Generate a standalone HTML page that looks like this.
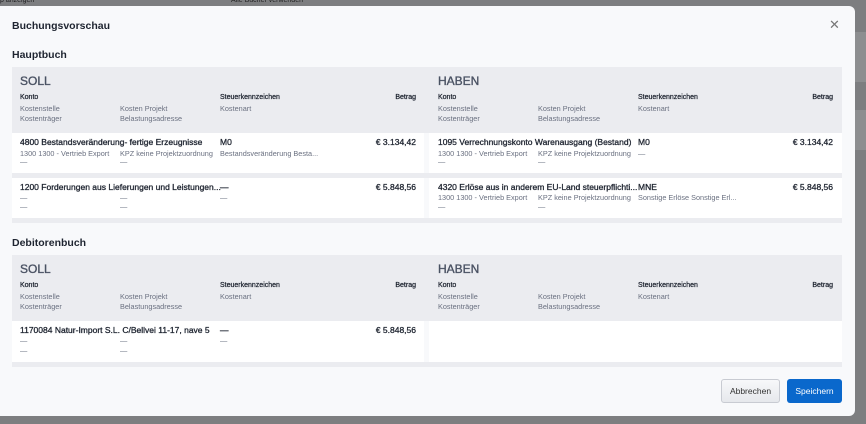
<!DOCTYPE html><html><head><meta charset="utf-8"><style>
*{margin:0;padding:0;box-sizing:border-box}
body{width:866px;height:424px;background:#7d7e80;font-family:"Liberation Sans",sans-serif;position:relative;overflow:hidden}
.a{position:absolute;white-space:nowrap}
.modal{position:absolute;left:0;top:6px;width:855px;height:410px;background:#f8f9fb;border-radius:0 6px 6px 0}
.hdr{position:absolute;background:#ebecf0}
.row{position:absolute;background:#fff}
.band{position:absolute;background:#ebecf0}
.t{font-size:12px;color:#4a5263;-webkit-text-stroke:0.35px #4a5263}
.h{font-size:7px;color:#1e2430;-webkit-text-stroke:0.25px #1e2430}
.s{font-size:7.3px;color:#6a7080}
.m{font-size:8.5px;color:#1e2430;-webkit-text-stroke:0.3px #1e2430}
.d{font-size:7.3px;color:#6a7080}
.r{text-align:right}
h2{position:absolute;font-size:10.5px;color:#1e2430;font-weight:bold}
</style></head><body>
<div class="a" style="left:0;top:-3px;font-size:7px;color:#222">p anzeigen</div>
<div class="a" style="left:231px;top:-3px;font-size:7px;color:#222">Alle Bücher verwenden</div>
<div class="a" style="left:855px;top:32px;width:11px;height:50px;background:#8d8e90"></div>
<div class="a" style="left:855px;top:110px;width:11px;height:40px;background:#8d8e90"></div>
<div class="modal"></div>
<h2 style="left:12px;top:20px;font-size:10.5px">Buchungsvorschau</h2>
<div class="a" style="left:829px;top:17px;font-size:13px;color:#777">✕</div>
<h2 style="left:12px;top:49px">Hauptbuch</h2>

<div class="hdr" style="left:12px;top:67px;width:830px;height:66px"></div>
<div class="band" style="left:12px;top:173px;width:830px;height:5px"></div>
<div class="band" style="left:12px;top:218px;width:830px;height:5px"></div>
<div class="row" style="left:12px;top:133px;width:412px;height:40px"></div>
<div class="row" style="left:429px;top:133px;width:413px;height:40px"></div>
<div class="row" style="left:12px;top:178px;width:412px;height:40px"></div>
<div class="row" style="left:429px;top:178px;width:413px;height:40px"></div>

<div class="a t" style="left:20px;top:74px">SOLL</div>
<div class="a h" style="left:20px;top:94px">Konto</div>
<div class="a s" style="left:20px;top:104px">Kostenstelle</div>
<div class="a s" style="left:20px;top:114px">Kostenträger</div>
<div class="a s" style="left:120px;top:104px">Kosten Projekt</div>
<div class="a s" style="left:120px;top:114px">Belastungsadresse</div>
<div class="a h" style="left:220px;top:94px">Steuerkennzeichen</div>
<div class="a s" style="left:220px;top:104px">Kostenart</div>
<div class="a h r" style="right:450px;top:94px">Betrag</div>

<div class="a t" style="left:438px;top:74px">HABEN</div>
<div class="a h" style="left:438px;top:94px">Konto</div>
<div class="a s" style="left:438px;top:104px">Kostenstelle</div>
<div class="a s" style="left:438px;top:114px">Kostenträger</div>
<div class="a s" style="left:538px;top:104px">Kosten Projekt</div>
<div class="a s" style="left:538px;top:114px">Belastungsadresse</div>
<div class="a h" style="left:638px;top:94px">Steuerkennzeichen</div>
<div class="a s" style="left:638px;top:104px">Kostenart</div>
<div class="a h r" style="right:33px;top:94px">Betrag</div>

<div class="a m" style="left:20px;top:137px">4800 Bestandsveränderung- fertige Erzeugnisse</div>
<div class="a d" style="left:20px;top:149px">1300 1300 - Vertrieb Export</div>
<div class="a d" style="left:120px;top:149px">KPZ keine Projektzuordnung</div>
<div class="a d" style="left:20px;top:157px">—</div><div class="a d" style="left:120px;top:157px">—</div>
<div class="a m" style="left:220px;top:137px">M0</div>
<div class="a d" style="left:220px;top:149px">Bestandsveränderung Besta...</div>
<div class="a m r" style="right:450px;top:137px">€ 3.134,42</div>

<div class="a m" style="left:438px;top:137px">1095 Verrechnungskonto Warenausgang (Bestand)</div>
<div class="a d" style="left:438px;top:149px">1300 1300 - Vertrieb Export</div>
<div class="a d" style="left:538px;top:149px">KPZ keine Projektzuordnung</div>
<div class="a d" style="left:438px;top:157px">—</div><div class="a d" style="left:538px;top:157px">—</div>
<div class="a m" style="left:638px;top:137px">M0</div>
<div class="a d" style="left:638px;top:149px">—</div>
<div class="a m r" style="right:33px;top:137px">€ 3.134,42</div>

<div class="a m" style="left:20px;top:182px">1200 Forderungen aus Lieferungen und Leistungen...</div>
<div class="a d" style="left:20px;top:193px">—</div><div class="a d" style="left:120px;top:193px">—</div>
<div class="a d" style="left:20px;top:202px">—</div><div class="a d" style="left:120px;top:202px">—</div>
<div class="a m" style="left:220px;top:182px">—</div>
<div class="a d" style="left:220px;top:193px">—</div>
<div class="a m r" style="right:450px;top:182px">€ 5.848,56</div>

<div class="a m" style="left:438px;top:182px">4320 Erlöse aus in anderem EU-Land steuerpflichti...</div>
<div class="a d" style="left:438px;top:193px">1300 1300 - Vertrieb Export</div>
<div class="a d" style="left:538px;top:193px">KPZ keine Projektzuordnung</div>
<div class="a d" style="left:438px;top:202px">—</div><div class="a d" style="left:538px;top:202px">—</div>
<div class="a m" style="left:638px;top:182px">MNE</div>
<div class="a d" style="left:638px;top:193px">Sonstige Erlöse Sonstige Erl...</div>
<div class="a m r" style="right:33px;top:182px">€ 5.848,56</div>

<h2 style="left:12px;top:237px">Debitorenbuch</h2>
<div class="hdr" style="left:12px;top:255px;width:830px;height:66px"></div>
<div class="band" style="left:12px;top:362px;width:830px;height:5px"></div>
<div class="row" style="left:12px;top:321px;width:412px;height:41px"></div>
<div class="row" style="left:429px;top:321px;width:413px;height:41px"></div>

<div class="a t" style="left:20px;top:262px">SOLL</div>
<div class="a h" style="left:20px;top:282px">Konto</div>
<div class="a s" style="left:20px;top:292px">Kostenstelle</div>
<div class="a s" style="left:20px;top:302px">Kostenträger</div>
<div class="a s" style="left:120px;top:292px">Kosten Projekt</div>
<div class="a s" style="left:120px;top:302px">Belastungsadresse</div>
<div class="a h" style="left:220px;top:282px">Steuerkennzeichen</div>
<div class="a s" style="left:220px;top:292px">Kostenart</div>
<div class="a h r" style="right:450px;top:282px">Betrag</div>

<div class="a t" style="left:438px;top:262px">HABEN</div>
<div class="a h" style="left:438px;top:282px">Konto</div>
<div class="a s" style="left:438px;top:292px">Kostenstelle</div>
<div class="a s" style="left:438px;top:302px">Kostenträger</div>
<div class="a s" style="left:538px;top:292px">Kosten Projekt</div>
<div class="a s" style="left:538px;top:302px">Belastungsadresse</div>
<div class="a h" style="left:638px;top:282px">Steuerkennzeichen</div>
<div class="a s" style="left:638px;top:292px">Kostenart</div>
<div class="a h r" style="right:33px;top:282px">Betrag</div>

<div class="a m" style="left:20px;top:325px">1170084 Natur-Import S.L. C/Bellvei 11-17, nave 5</div>
<div class="a d" style="left:20px;top:336px">—</div><div class="a d" style="left:120px;top:336px">—</div>
<div class="a d" style="left:20px;top:346px">—</div><div class="a d" style="left:120px;top:346px">—</div>
<div class="a m" style="left:220px;top:325px">—</div>
<div class="a d" style="left:220px;top:336px">—</div>
<div class="a m r" style="right:450px;top:325px">€ 5.848,56</div>

<div class="a" style="left:721px;top:379px;width:59px;height:24px;border:1px solid #c8cbd2;border-radius:3px;background:linear-gradient(#f7f8fa,#e6e8ec);font-size:8.5px;color:#333;text-align:center;line-height:22px">Abbrechen</div>
<div class="a" style="left:787px;top:379px;width:55px;height:24px;border-radius:3px;background:#0a68cc;font-size:8.5px;color:#fff;text-align:center;line-height:24px">Speichern</div>
</body></html>
